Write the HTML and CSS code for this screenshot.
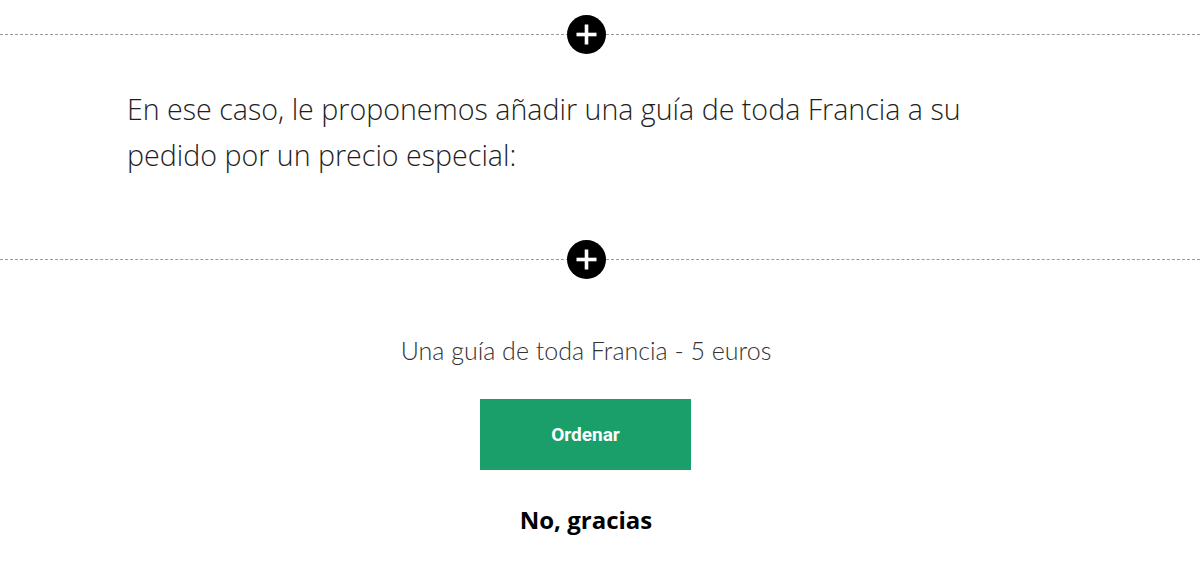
FILE: index.html
```html
<!DOCTYPE html>
<html lang="es">
<head>
    <meta charset="UTF-8">
    <title>Oferta especial</title>
    <link rel="stylesheet" href="styles.css">
</head>
<body>
    <div class="page">
        <div class="divider">
            <span class="add-btn">
                <svg width="39" height="39" viewBox="0 0 39 39">
                    <circle cx="19.5" cy="19.5" r="19.5" fill="#000"/>
                    <rect x="9.5" y="17.7" width="20" height="3.6" fill="#fff"/>
                    <rect x="17.7" y="9.5" width="3.6" height="20" fill="#fff"/>
                </svg>
            </span>
        </div>

        <section class="intro">
            <p>En ese caso, le proponemos añadir una guía de toda Francia a su pedido por un precio especial:</p>
        </section>

        <div class="divider">
            <span class="add-btn">
                <svg width="39" height="39" viewBox="0 0 39 39">
                    <circle cx="19.5" cy="19.5" r="19.5" fill="#000"/>
                    <rect x="9.5" y="17.7" width="20" height="3.6" fill="#fff"/>
                    <rect x="17.7" y="9.5" width="3.6" height="20" fill="#fff"/>
                </svg>
            </span>
        </div>

        <section class="offer">
            <p class="offer-title">Una guía de toda Francia - 5 euros</p>
            <button class="order-btn">Ordenar</button>
            <a class="decline" href="#">No, gracias</a>
        </section>
    </div>
</body>
</html>
```

FILE: styles.css
```css
body {
    margin: 0;
    background: #fff;
    font-family: 'Open Sans', sans-serif;
}

.page {
    padding-top: 15px;
}

.divider {
    position: relative;
    height: 39px;
    padding-right: 28px;
    display: flex;
    justify-content: center;
    align-items: center;
}

.divider::before {
    content: "";
    position: absolute;
    left: 0;
    right: 0;
    top: 19px;
    border-top: 1px dashed #9a9a9a;
}

.add-btn {
    position: relative;
    display: block;
    width: 39px;
    height: 39px;
}

.add-btn svg {
    display: block;
}

.intro {
    padding: 32px 0 62px 127px;
}

.intro p {
    margin: 0;
    max-width: 880px;
    font-size: 28.6px;
    font-weight: 300;
    line-height: 46px;
    color: #1e1e1e;
}

.offer {
    display: flex;
    flex-direction: column;
    align-items: center;
    width: 1172px;
    padding-top: 56px;
}

.offer-title {
    margin: 0;
    font-family: 'Lato', sans-serif;
    font-weight: 300;
    font-size: 25px;
    color: #333;
}

.order-btn {
    margin-top: 34px;
    margin-right: 1px;
    width: 211px;
    height: 71px;
    border: none;
    background: #1a9e6a;
    color: #fff;
    font-family: 'Roboto', sans-serif;
    font-weight: 700;
    font-size: 19px;
    cursor: pointer;
}

.decline {
    margin-top: 33px;
    font-size: 24px;
    font-weight: 700;
    color: #000;
    text-decoration: none;
}
```
